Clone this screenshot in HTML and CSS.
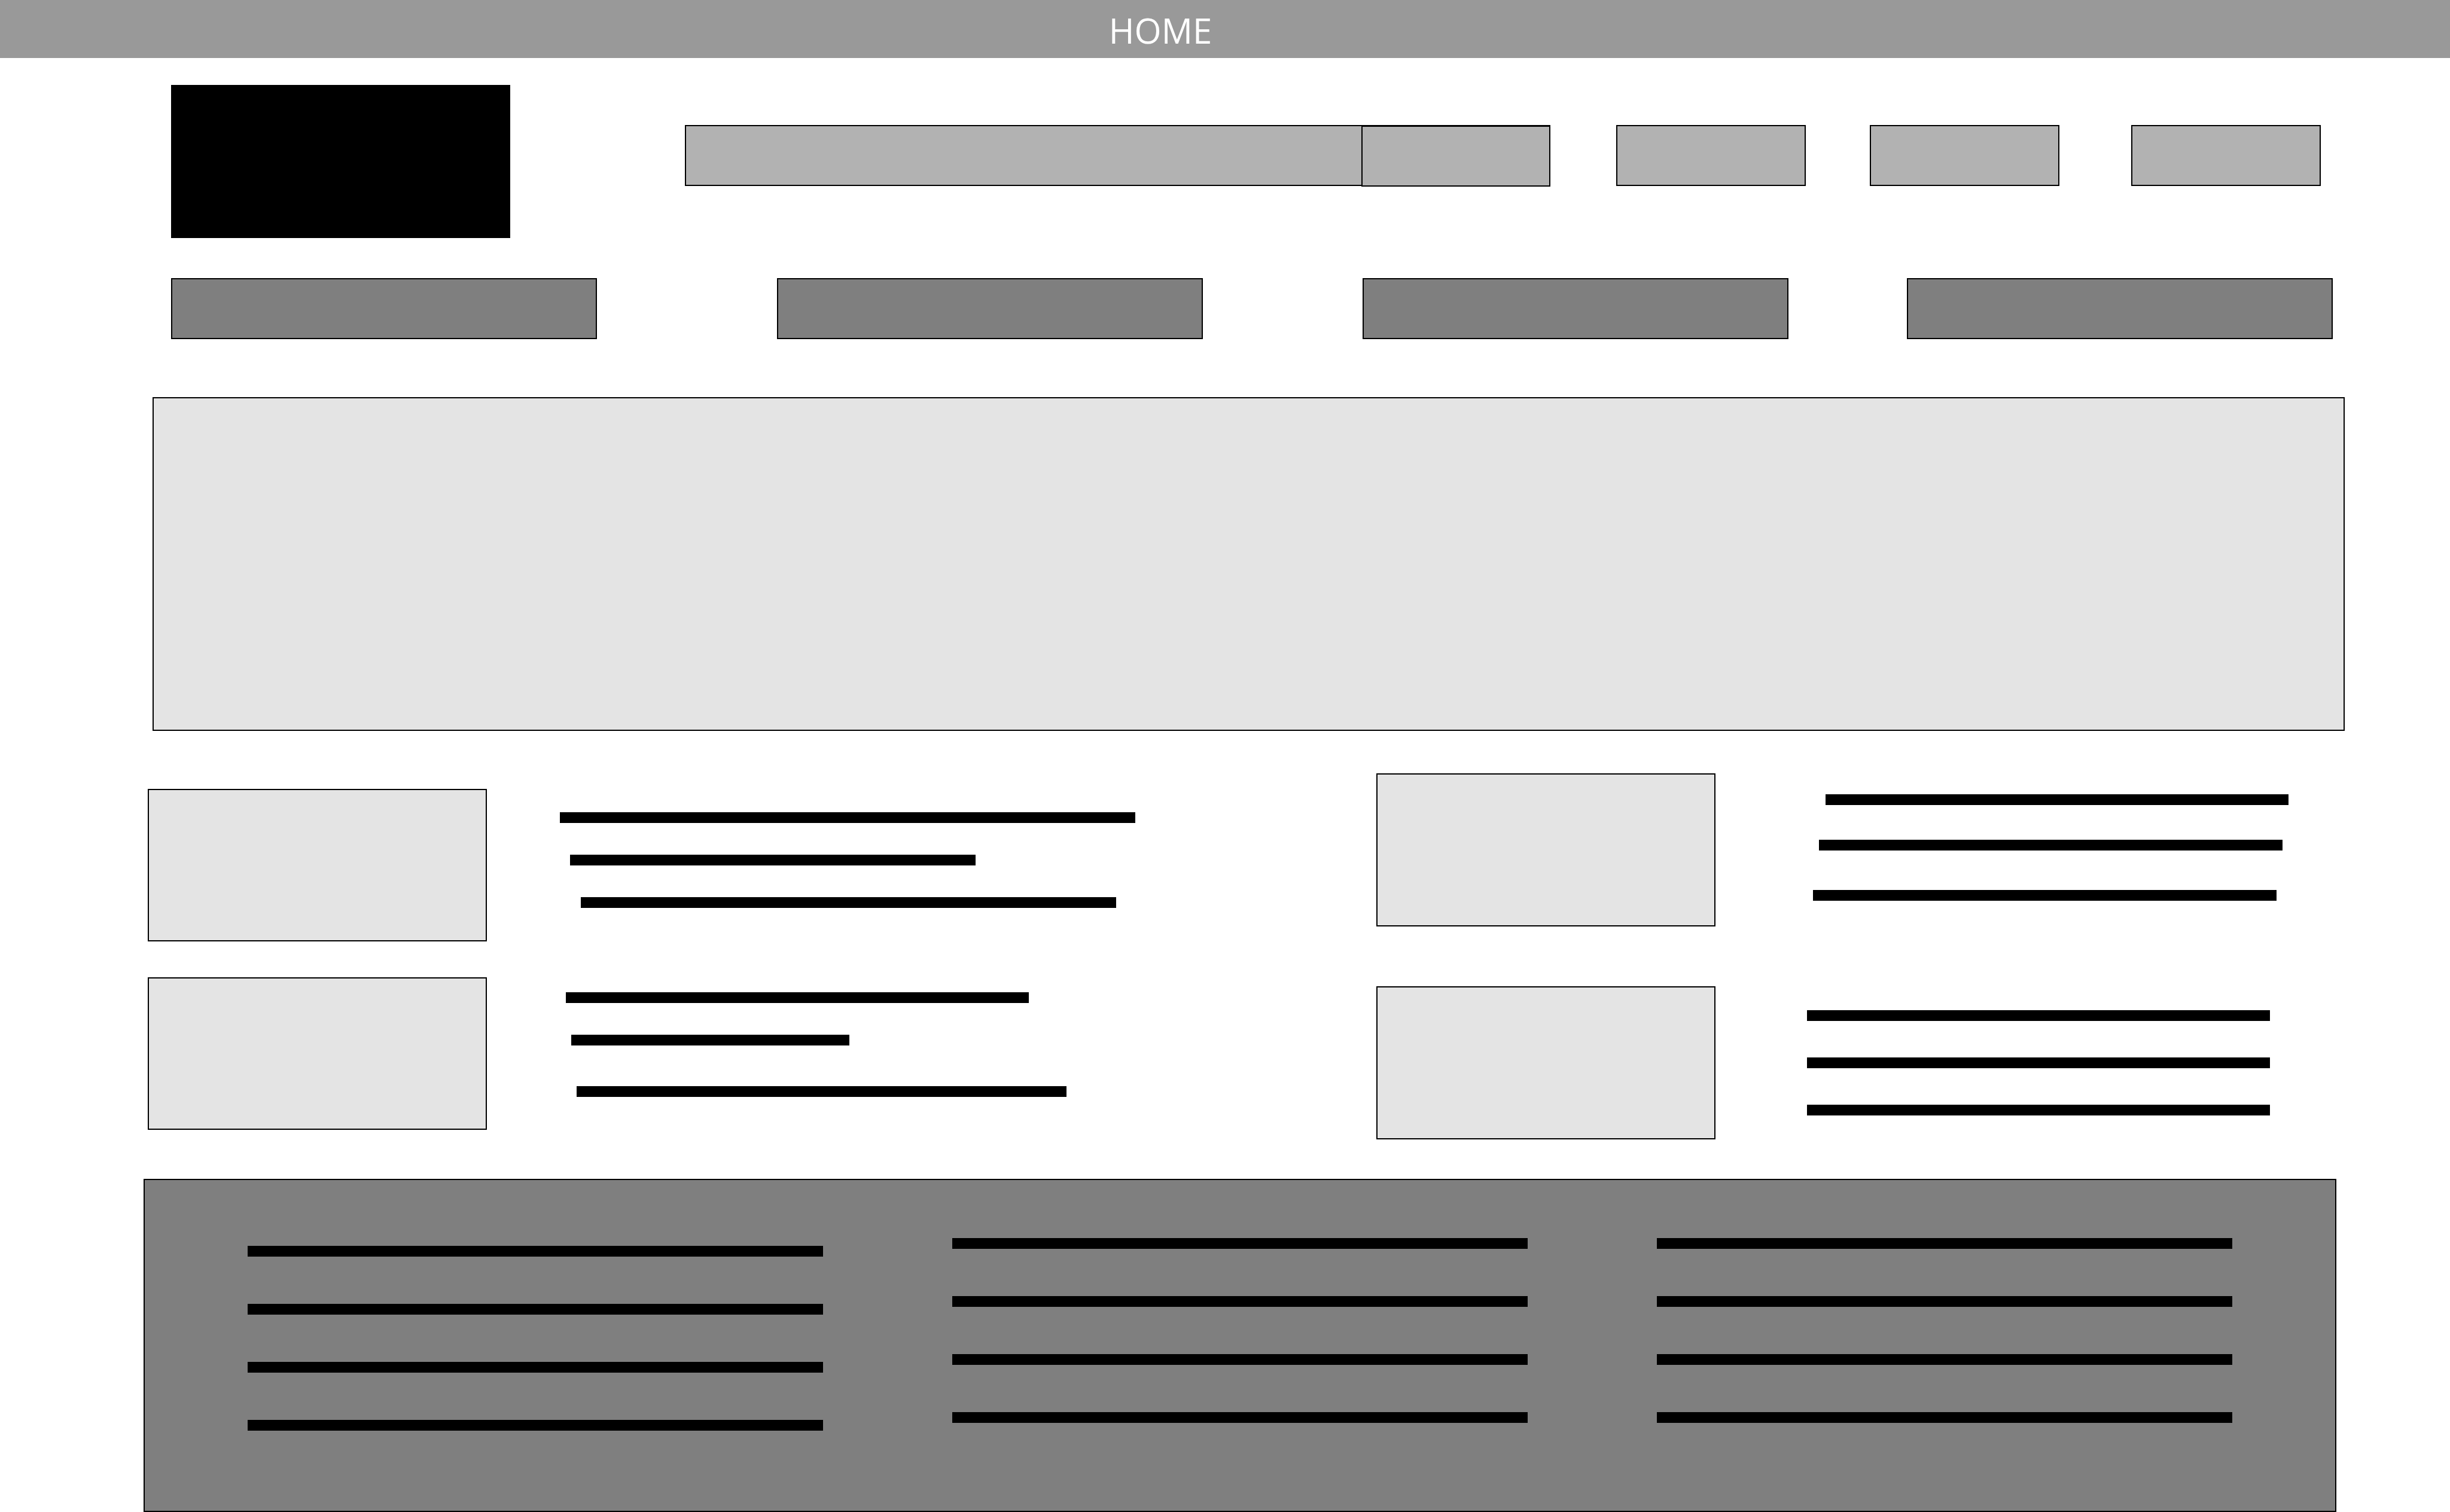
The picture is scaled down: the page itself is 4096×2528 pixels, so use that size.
FILE: index.html
```html
<!DOCTYPE html>
<html lang="en">
<head>
<meta charset="utf-8">
<meta name="viewport" content="width=device-width, initial-scale=1">
<title>Home</title>
<link rel="stylesheet" href="styles.css">
</head>
<body>
<header class="titlebar"><h1 class="title">HOME</h1></header>

<div class="masthead">
  <a class="logo" href="#" aria-label="Logo"></a>
  <form class="search">
    <input class="search-field" type="search" aria-label="Search">
    <button class="box search-button" type="button" aria-label="Search"></button>
  </form>
  <button class="box action action-1" type="button" aria-label="Account"></button>
  <button class="box action action-2" type="button" aria-label="Orders"></button>
  <button class="box action action-3" type="button" aria-label="Cart"></button>
</div>

<nav class="menu" aria-label="Main">
  <a class="menu-link menu-link-1" href="#" aria-label="Section 1"></a>
  <a class="menu-link menu-link-2" href="#" aria-label="Section 2"></a>
  <a class="menu-link menu-link-3" href="#" aria-label="Section 3"></a>
  <a class="menu-link menu-link-4" href="#" aria-label="Section 4"></a>
</nav>

<main>
  <div class="banner-row"><section class="banner" aria-label="Banner"></section></div>

  <div class="features">
    <div class="column column-left">
      <article class="entry">
        <div class="thumb"></div>
        <div class="lines lines-a"><div class="line"></div><div class="line"></div><div class="line"></div></div>
      </article>
      <article class="entry">
        <div class="thumb"></div>
        <div class="lines lines-b"><div class="line"></div><div class="line"></div><div class="line"></div></div>
      </article>
    </div>
    <div class="column column-right">
      <article class="entry">
        <div class="thumb"></div>
        <div class="lines lines-c"><div class="line"></div><div class="line"></div><div class="line"></div></div>
      </article>
      <article class="entry">
        <div class="thumb"></div>
        <div class="lines lines-d"><div class="line"></div><div class="line"></div><div class="line"></div></div>
      </article>
    </div>
  </div>
</main>

<div class="footer-row">
  <footer class="footer">
    <div class="footer-lines footer-first"><div class="line"></div><div class="line"></div><div class="line"></div><div class="line"></div></div>
    <div class="footer-lines footer-second"><div class="line"></div><div class="line"></div><div class="line"></div><div class="line"></div></div>
    <div class="footer-lines footer-third"><div class="line"></div><div class="line"></div><div class="line"></div><div class="line"></div></div>
  </footer>
</div>
</body>
</html>
```
FILE: styles.css
```css
* { box-sizing: border-box; }

body {
  margin: 0;
  background: #fff;
  font-family: "Open Sans", "Noto Sans", sans-serif;
}

/* Title bar: the heading is centred a little left of the middle */
.titlebar {
  display: grid;
  grid-template-columns: 3880fr 216fr;
  padding: 11px 0 6px;
  background: #999;
}

.title {
  margin: 0;
  color: #fff;
  font-size: 58px;
  font-weight: 400;
  line-height: 80px;
  text-align: center;
}

/* Logo, search and actions */
.masthead {
  display: grid;
  grid-template-columns: 286fr 567fr 292fr 1447fr 110fr 317fr 107fr 317fr 120fr 317fr 216fr;
  align-items: start;
  padding-top: 45px;
}

.logo {
  grid-column: 2;
  height: 256px;
  background: #000;
}

.box,
.search-field {
  height: 102px;
  margin: 0;
  padding: 0;
  border: 2px solid #000;
  border-radius: 0;
  background: #b2b2b2;
}

.search {
  display: grid;
  grid-column: 4;
  grid-template-columns: 1131fr 316fr;
  margin-top: 67px;
}

.search-field {
  grid-area: 1 / 1 / 2 / 3;
  width: 100%;
  appearance: none;
}

.search-button {
  grid-area: 1 / 2 / 2 / 3;
  margin-top: 1px;
}

.action { margin-top: 67px; }
.action-1 { grid-column: 6; }
.action-2 { grid-column: 8; }
.action-3 { grid-column: 10; }

/* Main menu */
.menu {
  display: grid;
  grid-template-columns: 286fr 712fr 301fr 712fr 267fr 712fr 198fr 712fr 196fr;
  margin-top: 67px;
}

.menu-link {
  height: 102px;
  border: 2px solid #000;
  background: #7f7f7f;
}

.menu-link-1 { grid-column: 2; }
.menu-link-2 { grid-column: 4; }
.menu-link-3 { grid-column: 6; }
.menu-link-4 { grid-column: 8; }

/* Banner */
.banner-row {
  display: grid;
  grid-template-columns: 255fr 3665fr 176fr;
  margin-top: 97px;
}

.banner {
  grid-column: 2;
  height: 558px;
  border: 2px solid #000;
  background: #e4e4e4;
}

/* Feature entries */
.features {
  display: grid;
  grid-template-columns: 247fr 2054fr 1795fr;
  align-items: start;
  padding: 71px 0 66px;
}

.column { display: grid; }

.column-left {
  grid-column: 2;
  row-gap: 60px;
  padding-top: 26px;
}

.column-right {
  grid-column: 3;
  row-gap: 100px;
}

.entry { display: grid; }
.column-left .entry { grid-template-columns: 567fr 122fr 962fr 403fr; }
.column-right .entry { grid-template-columns: 567fr 153fr 805fr 270fr; }

.thumb {
  height: 255px;
  border: 2px solid #000;
  background: #e4e4e4;
}

.column-right .thumb { height: 256px; }

.lines {
  display: flex;
  flex-direction: column;
  grid-column: 3;
}

.line {
  height: 18px;
  background: #000;
}

.lines-a { gap: 53px; padding-top: 39px; }
.lines-a .line:nth-child(2) { width: 70.4%; margin-left: 1.8%; }
.lines-a .line:nth-child(3) { width: 93.1%; margin-left: 3.6%; }

.lines-b { gap: 53px; padding-top: 25px; }
.lines-b .line:nth-child(1) { width: 80.5%; margin-left: 1%; }
.lines-b .line:nth-child(2) { width: 48.3%; margin-left: 2%; }
.lines-b .line:nth-child(3) { width: 85.1%; margin: 15px 0 0 2.9%; }

.lines-c { gap: 58px; padding-top: 35px; }
.lines-c .line { width: 96.2%; }
.lines-c .line:nth-child(1) { margin-left: 3.8%; }
.lines-c .line:nth-child(2) { margin-left: 2.5%; }
.lines-c .line:nth-child(3) { margin: 8px 0 0 1.3%; }

.lines-d { gap: 61px; padding-top: 40px; }
.lines-d .line { width: 96.2%; }

/* Footer */
.footer-row {
  display: grid;
  grid-template-columns: 240fr 3666fr 190fr;
}

.footer {
  display: grid;
  grid-column: 2;
  grid-template-columns: 172fr 962fr 216fr 962fr 216fr 962fr 172fr;
  padding: 97px 0 134px;
  border: 2px solid #000;
  background: #7f7f7f;
}

.footer-lines {
  display: grid;
  align-content: start;
  row-gap: 79px;
}

.footer-first { grid-column: 2; padding-top: 13px; }
.footer-second { grid-column: 4; }
.footer-third { grid-column: 6; }
```
